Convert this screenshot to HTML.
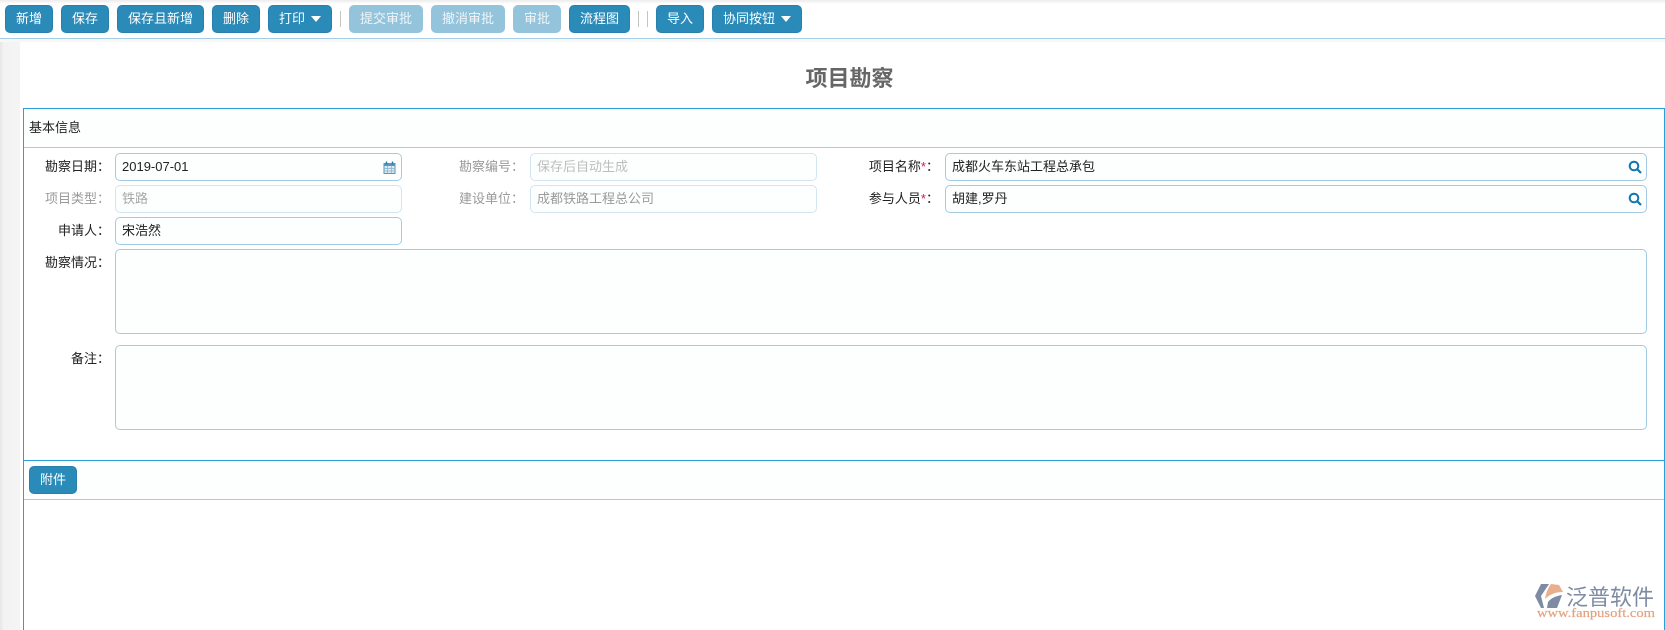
<!DOCTYPE html>
<html lang="zh-CN">
<head>
<meta charset="utf-8">
<title>项目勘察</title>
<style>
html,body{margin:0;padding:0;width:1665px;height:630px;overflow:hidden;background:#fff;}
body{position:relative;font-family:"Liberation Sans","WenQuanYi Zen Hei","Noto Sans CJK SC",sans-serif;font-size:13px;color:#222;}
.a{position:absolute;box-sizing:border-box;}
.btn{position:absolute;top:5px;height:28px;box-sizing:border-box;background:#2a8ab8;border:1px solid #2880ae;border-radius:5px;color:#fff;font-size:13px;line-height:26px;text-align:center;white-space:nowrap;}
.btn.off{background:#94c4dc;border-color:#94c4dc;color:#eef5f9;}
.caret{display:inline-block;width:0;height:0;border-left:5px solid transparent;border-right:5px solid transparent;border-top:6px solid #fff;margin-left:6px;vertical-align:1px;}
.sep{position:absolute;top:11px;height:16px;width:1px;background:#c4c4c4;}
.lb{position:absolute;text-align:right;white-space:nowrap;line-height:28px;height:28px;font-size:13px;color:#222;}
.lb.dim{color:#9a9a9a;}
.lb i{font-style:normal;color:#e0143c;}
.in{position:absolute;box-sizing:border-box;height:28px;background:#fdfefe;border:1px solid #a3cbe3;border-radius:5px;padding-left:6px;line-height:26px;font-size:13px;color:#222;white-space:nowrap;}
.in.dim{border-color:#d2e5f1;color:#a8a8a8;}
.in.ph{border-color:#d2e5f1;color:#bdbdbd;}
.ta{position:absolute;box-sizing:border-box;left:115px;width:1532px;height:85px;background:#fdfefe;border:1px solid #a3cbe3;border-radius:5px;}
</style>
</head>
<body>
<div class="a" style="left:0;top:0;width:1665px;height:4px;background:linear-gradient(#ececec,#fff);"></div>
<div class="btn" style="left:5px;width:48px;">新增</div>
<div class="btn" style="left:61px;width:48px;">保存</div>
<div class="btn" style="left:117px;width:87px;">保存且新增</div>
<div class="btn" style="left:212px;width:48px;">删除</div>
<div class="btn" style="left:268px;width:64px;">打印<span class="caret"></span></div>
<div class="sep" style="left:340px;"></div>
<div class="btn off" style="left:349px;width:74px;">提交审批</div>
<div class="btn off" style="left:431px;width:74px;">撤消审批</div>
<div class="btn off" style="left:513px;width:48px;">审批</div>
<div class="btn" style="left:569px;width:61px;">流程图</div>
<div class="sep" style="left:638px;"></div>
<div class="sep" style="left:647px;"></div>
<div class="btn" style="left:656px;width:48px;">导入</div>
<div class="btn" style="left:712px;width:90px;">协同按钮<span class="caret"></span></div>

<div class="a" style="left:0;top:38px;width:1665px;height:1px;background:#a5cde6;"></div>
<div class="a" style="left:0;top:39px;width:1665px;height:3px;background:#f7f7f7;"></div>
<div class="a" style="left:0;top:42px;width:20px;height:588px;background:linear-gradient(90deg,#e6e6e6,#f3f3f3 4px,#f4f4f4);"></div>

<div class="a" style="left:20px;top:64px;width:1659px;height:30px;line-height:30px;text-align:center;font-size:22px;font-weight:bold;color:#666;font-family:'Liberation Sans','Noto Sans CJK SC',sans-serif;">项目勘察</div>

<!-- panel -->
<div class="a" style="left:23px;top:108px;width:1642px;height:522px;border:1px solid #2ba0d6;border-bottom:none;background:#fff;"></div>
<div class="a" style="left:24px;top:109px;width:1640px;height:39px;background:#fdfefe;border-bottom:1px solid #a8cbe0;"></div>
<div class="a" style="left:29px;top:110px;line-height:35px;font-size:13px;color:#222;">基本信息</div>
<div class="a" style="left:24px;top:148px;width:1640px;height:312px;background:#fff;"></div>

<div class="lb" style="right:1555px;top:153px;">勘察日期：</div>
<div class="in" style="left:115px;top:153px;width:287px;">2019-07-01
<svg style="position:absolute;right:5px;top:7px;" width="13" height="13" viewBox="0 0 13 13"><rect x="1" y="2.500" width="11" height="10" fill="#dbe9f3" stroke="#5a97bc"/><rect x="1" y="2.500" width="11" height="2.500" fill="#5a97bc"/><path d="M3.500 .5v3M9.500 .5v3" stroke="#2a78a8" stroke-width="1.400"/><path d="M1 7.500h11M1 10h11M4.500 5v7M8.500 5v7" stroke="#86b2cd" stroke-width=".7"/></svg></div>
<div class="lb dim" style="right:1555px;top:185px;">项目类型：</div>
<div class="in dim" style="left:115px;top:185px;width:287px;">铁路</div>
<div class="lb" style="right:1555px;top:217px;">申请人：</div>
<div class="in" style="left:115px;top:217px;width:287px;">宋浩然</div>
<div class="lb" style="right:1555px;top:249px;height:28px;">勘察情况：</div>
<div class="ta" style="top:249px;"></div>
<div class="lb" style="right:1555px;top:345px;">备注：</div>
<div class="ta" style="top:345px;"></div>

<div class="lb dim" style="right:1141px;top:153px;">勘察编号：</div>
<div class="in ph" style="left:530px;top:153px;width:287px;">保存后自动生成</div>
<div class="lb dim" style="right:1141px;top:185px;">建设单位：</div>
<div class="in dim" style="left:530px;top:185px;width:287px;color:#9a9a9a;">成都铁路工程总公司</div>

<div class="lb" style="right:726px;top:153px;">项目名称<i>*</i>：</div>
<div class="in" style="left:945px;top:153px;width:702px;">成都火车东站工程总承包
<svg style="position:absolute;right:4px;top:6px;" width="14" height="14" viewBox="0 0 14 14"><circle cx="6" cy="6" r="4.300" fill="none" stroke="#0f78ab" stroke-width="2"/><path d="M9 9l4 4" stroke="#0f78ab" stroke-width="2.200"/></svg></div>
<div class="lb" style="right:726px;top:185px;">参与人员<i>*</i>：</div>
<div class="in" style="left:945px;top:185px;width:702px;">胡建,罗丹
<svg style="position:absolute;right:4px;top:6px;" width="14" height="14" viewBox="0 0 14 14"><circle cx="6" cy="6" r="4.300" fill="none" stroke="#0f78ab" stroke-width="2"/><path d="M9 9l4 4" stroke="#0f78ab" stroke-width="2.200"/></svg></div>

<!-- attachment -->
<div class="a" style="left:24px;top:460px;width:1640px;height:1px;background:#2ba0d6;"></div>
<div class="a" style="left:24px;top:461px;width:1640px;height:39px;background:#fdfefe;border-bottom:1px solid #a8cbe0;"></div>
<div class="btn" style="left:29px;top:466px;width:48px;">附件</div>

<!-- logo -->
<svg class="a" style="left:1530px;top:580px;" width="130" height="46" viewBox="0 0 130 46">
<path d="M11 4H19L11 16 14 28H11L5 16Z" fill="#7d8ba3"/>
<path d="M21 4L29 5 33 12C26 12 20 14 15 19 16 13 18 8 21 4Z" fill="#e9ae8c"/>
<path d="M17 28L18 22C21 18 26 16 32 15L27 28Z" fill="#7d8ba3"/>
<text x="36" y="25" font-family="'Noto Sans CJK SC',sans-serif" font-size="22" fill="#7d8ba3" textLength="88" lengthAdjust="spacingAndGlyphs">泛普软件</text>
<text x="7" y="37" font-family="'Liberation Serif',serif" font-size="13" fill="#e3a27e" stroke="#e3a27e" stroke-width=".2" textLength="118" lengthAdjust="spacingAndGlyphs">www.fanpusoft.com</text>
</svg>
</body>
</html>
